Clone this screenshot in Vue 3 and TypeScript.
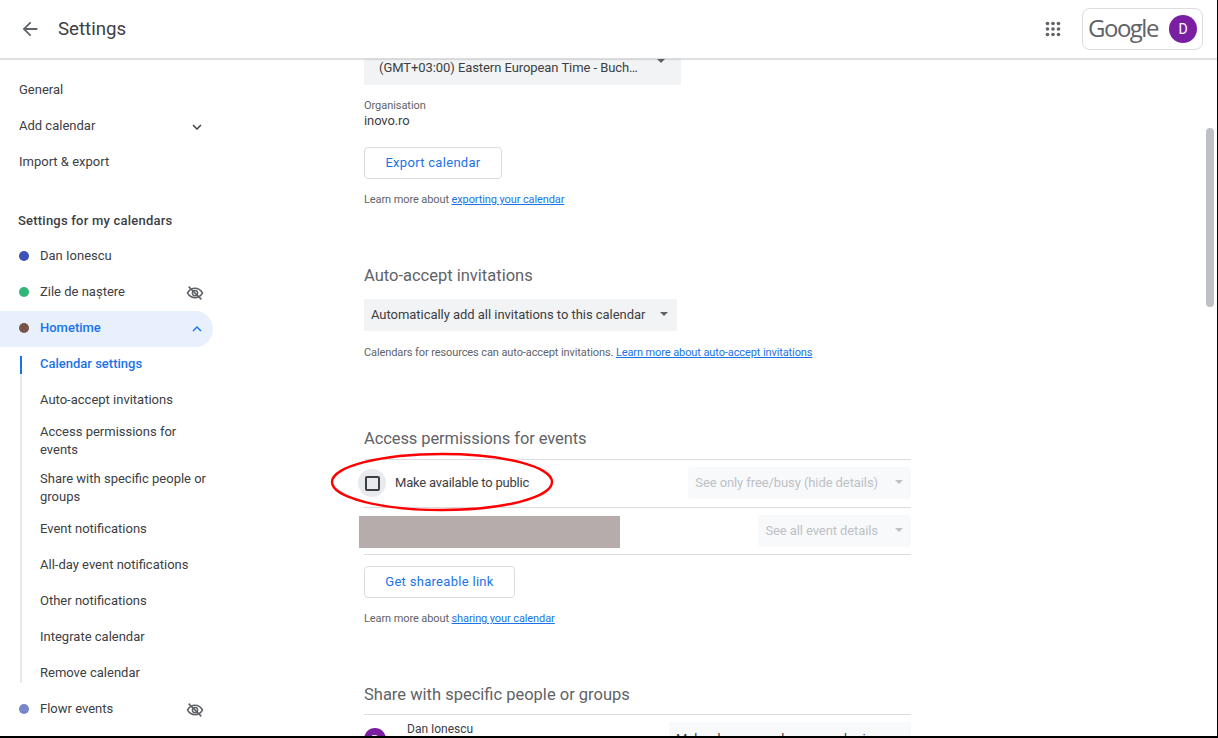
<script setup lang="ts">
const subItems: { label: string; lines?: boolean }[] = [
  { label: 'Auto-accept invitations' },
  { label: 'Access permissions for events', lines: true },
  { label: 'Share with specific people or groups', lines: true },
  { label: 'Event notifications' },
  { label: 'All-day event notifications' },
  { label: 'Other notifications' },
  { label: 'Integrate calendar' },
  { label: 'Remove calendar' },
]
</script>

<template>
  <div class="page">
    <header class="top">
      <svg class="back" width="22" height="22" viewBox="0 0 24 24"><path d="M20 11H7.83l5.59-5.59L12 4l-8 8 8 8 1.41-1.41L7.83 13H20v-2z" fill="#5f6368"/></svg>
      <div class="title">Settings</div>
      <svg class="apps" width="22" height="22" viewBox="0 0 24 24" fill="#5f6368"><circle cx="6" cy="6" r="2"/><circle cx="12" cy="6" r="2"/><circle cx="18" cy="6" r="2"/><circle cx="6" cy="12" r="2"/><circle cx="12" cy="12" r="2"/><circle cx="18" cy="12" r="2"/><circle cx="6" cy="18" r="2"/><circle cx="12" cy="18" r="2"/><circle cx="18" cy="18" r="2"/></svg>
      <div class="account">
        <span class="wordmark">Google</span>
        <span class="avatar">D</span>
      </div>
    </header>

    <div class="body">
      <nav class="side">
        <div class="item">General</div>
        <div class="item between">Add calendar
          <svg width="18" height="18" viewBox="0 0 24 24"><path d="M7.41 8.59 12 13.17l4.59-4.58L18 10l-6 6-6-6z" fill="#3c4043"/></svg>
        </div>
        <div class="item">Import &amp; export</div>
        <div class="group">Settings for my calendars</div>
        <div class="item cal"><i class="dot" style="background:#3f51b5"></i>Dan Ionescu</div>
        <div class="item cal"><i class="dot" style="background:#33b679"></i>Zile de naștere
          <svg class="eye" width="18" height="18" viewBox="0 0 24 24" fill="none" stroke="#5f6368" stroke-width="2"><path d="M2 12c2.500-4.200 6-6.300 10-6.300s7.500 2.100 10 6.300c-2.500 4.200-6 6.300-10 6.300S4.500 16.200 2 12z"/><circle cx="12" cy="12" r="3.500"/><path d="M3.500 3.500l17 17"/></svg>
        </div>
        <div class="item cal active"><i class="dot" style="background:#795548"></i>Hometime
          <svg class="chev" width="18" height="18" viewBox="0 0 24 24"><path d="M7.41 15.41 12 10.830l4.590 4.580L18 14l-6-6-6 6z" fill="#1a73e8"/></svg>
        </div>
        <div class="subs">
          <div class="sub current">Calendar settings</div>
          <div v-for="s in subItems" :key="s.label" class="sub" :class="{ two: s.lines }">{{ s.label }}</div>
        </div>
        <div class="item cal"><i class="dot" style="background:#7986cb"></i>Flowr events
          <svg class="eye" width="18" height="18" viewBox="0 0 24 24" fill="none" stroke="#5f6368" stroke-width="2"><path d="M2 12c2.500-4.200 6-6.300 10-6.300s7.500 2.100 10 6.300c-2.500 4.200-6 6.300-10 6.300S4.500 16.200 2 12z"/><circle cx="12" cy="12" r="3.500"/><path d="M3.500 3.500l17 17"/></svg>
        </div>
      </nav>

      <main class="main">
        <div class="content">
          <div class="tz">
            <span>(GMT+03:00) Eastern European Time - Buch…</span>
            <i class="caret dark tzcaret"></i>
          </div>
          <div class="label">Organisation</div>
          <div class="org">inovo.ro</div>
          <button class="btn export">Export calendar</button>
          <p class="hint">Learn more about <a>exporting your calendar</a></p>

          <h2 class="h auto">Auto-accept invitations</h2>
          <div class="select">Automatically add all invitations to this calendar<i class="caret dark"></i></div>
          <p class="hint h2gap">Calendars for resources can auto-accept invitations. <a>Learn more about auto-accept invitations</a></p>

          <h2 class="h access">Access permissions for events</h2>
          <div class="row first">
            <div class="check">
              <span class="halo"><span class="box"></span></span>
              <span class="checklabel">Make available to public</span>
              <svg class="ring" width="226" height="62" viewBox="0 0 226 62"><ellipse cx="113" cy="31" rx="110" ry="28" fill="none" stroke="#f00" stroke-width="2.400"/></svg>
            </div>
            <div class="select off">See only free/busy (hide details)<i class="caret"></i></div>
          </div>
          <div class="row second">
            <div class="redact"></div>
            <div class="select off">See all event details<i class="caret"></i></div>
          </div>
          <button class="btn link">Get shareable link</button>
          <p class="hint">Learn more about <a>sharing your calendar</a></p>

          <h2 class="h share">Share with specific people or groups</h2>
          <div class="person">
            <span class="pavatar">D</span>
            <span class="pname">Dan Ionescu</span>
            <div class="select perm">Make changes and manage sharing</div>
          </div>
        </div>
      </main>

      <div class="track"><div class="thumb"></div></div>
    </div>
    <div class="edge"></div>
  </div>
</template>

<style>
html, body { margin: 0; overflow: hidden; background: #fff; }
</style>

<style scoped>
.page {
  width: 1218px; height: 738px; display: flex; flex-direction: column; overflow: hidden; position: relative;
  font-family: Roboto, "Liberation Sans", sans-serif; color: #3c4043; background: #fff;
}
.page::after { content: ""; position: absolute; right: 0; top: 0; bottom: 0; width: 1px; background: #000; z-index: 4; }
.top {
  height: 58px; flex: none; display: flex; align-items: center; border-bottom: 1px solid #dadce0;
  box-shadow: 0 1px 1px rgba(60,64,67,.15); position: relative; z-index: 2; background: #fff;
}
.back { margin-left: 19px; }
.title { font-size: 18.7px; margin-left: 17px; flex: 1; color: #3c4043; }
.apps { margin-right: 18px; }
.account {
  width: 121px; height: 42px; margin-right: 15px; border: 1px solid #dadce0; border-radius: 8px;
  display: flex; align-items: center; justify-content: space-between; padding: 0 5px 0 5px; box-sizing: border-box;
}
.wordmark { font-family: "Open Sans", sans-serif; font-size: 24px; letter-spacing: -1.5px; color: #5f6368; margin-top: -3px; }
.avatar {
  width: 28px; height: 28px; border-radius: 50%; background: #7b1fa2; color: #fff; font-size: 14px;
  display: flex; align-items: center; justify-content: center;
}
.body { flex: 1; display: flex; min-height: 0; }
.side { width: 213px; flex: none; padding-top: 13px; font-size: 13px; box-sizing: border-box; }
.item {
  height: 36px; display: flex; align-items: center; padding-left: 19px; padding-bottom: 2px; box-sizing: border-box; position: relative;
  color: #3c4043;
}
.between svg { position: absolute; left: 188px; top: 10px; }
.group { font-size: 13px; font-weight: 500; margin-top: 23px; height: 36px; line-height: 36px; padding-left: 18px; letter-spacing: .22px; color: #3c4043; }
.cal { padding-left: 40px; padding-bottom: 4px; }
.dot { position: absolute; left: 19px; top: 12px; width: 10px; height: 10px; border-radius: 50%; }
.eye { position: absolute; left: 186px; top: 9px; }
.chev { position: absolute; left: 188px; top: 9px; }
.active { background: #e8f0fe; color: #1a73e8; font-weight: 500; border-radius: 0 18px 18px 0; }
.subs { margin-left: 20px; padding-left: 20px; width: 173px; position: relative; }
.subs::before { content: ""; position: absolute; left: 0; top: 9px; bottom: 9px; width: 2px; background: #e8eaed; }
.sub { height: 36px; line-height: 34px; color: #3c4043; }
.sub.two { height: auto; line-height: 18px; padding: 4px 0 6.5px; width: 170px; }
.current { color: #1a73e8; font-weight: 500; position: relative; }
.current::before { content: ""; position: absolute; left: -20px; top: 9px; height: 18px; width: 2px; background: #1a73e8; }
.main { width: 547px; margin-left: 115px; padding-left: 36px; flex: none; overflow: hidden; position: relative; }
.content { display: flex; flex-direction: column; align-items: flex-start; }
.tz {
  width: 317px; height: 26px; box-sizing: border-box; background: #f1f3f4; border-radius: 0 0 2px 2px;
  font-size: 13px; padding-left: 15px; letter-spacing: -.07px; position: relative; line-height: 17px;
}
.tzcaret { position: absolute; right: 16px; top: 0; margin: 0; }
.label { font-size: 11px; color: #5f6368; margin-top: 14px; line-height: 14px; letter-spacing: -.05px; }
.org { font-size: 13px; line-height: 18px; margin-top: -1px; color: #3c4043; letter-spacing: -.1px; }
.btn {
  font: 400 13px Roboto, sans-serif; color: #1a73e8; background: #fff; border: 1px solid #dadce0; border-radius: 4px;
  height: 32px; padding: 0 0 2px; letter-spacing: .3px;
}
.export { width: 138px; margin-top: 17px; }
.hint { font-size: 11px; color: #5f6368; margin: 14px 0 0; line-height: 14px; letter-spacing: -.1px; }
.hint a { color: #1a73e8; text-decoration: underline; }
.h { font-weight: 400; font-size: 16.5px; color: #5f6368; margin: 0; line-height: 22px; }
.auto { margin-top: 58px; }
.select {
  display: flex; align-items: center; background: #f1f3f4; height: 32px; font-size: 13px; color: #3c4043;
  padding: 0 9px 2px 7px; box-sizing: border-box; border-radius: 2px; margin-top: 12px; letter-spacing: -.04px;
}
.caret { display: inline-block; width: 0; height: 0; border: 4px solid transparent; border-top: 4px solid #bdc1c6; border-bottom: 0; margin-left: 15px; }
.caret.dark { border-top-color: #5f6368; }
.h2gap { margin-top: 15px; }
.access { margin-top: 68px; letter-spacing: -.1px; }
.row {
  width: 547px; height: 48px; display: flex; align-items: center; justify-content: space-between;
  border-bottom: 1px solid #dadce0; box-sizing: border-box;
}
.first { height: 49px; border-top: 1px solid #dadce0; margin-top: 9px; padding-bottom: 1px; }
.second { height: 47px; }
.check { display: flex; align-items: center; position: relative; margin-left: -6px; }
.halo { width: 28px; height: 28px; border-radius: 50%; background: #e8eaed; display: flex; align-items: center; justify-content: center; }
.box { width: 15px; height: 15px; border: 2px solid #3c4043; border-radius: 2px; box-sizing: border-box; }
.checklabel { font-size: 13px; margin: -2px 0 0 9px; letter-spacing: -.2px; color: #3c4043; }
.ring { position: absolute; left: -29px; top: -18px; }
.select.off { margin-top: 0; background: #f8f9fa; color: #bdc1c6; padding: 0 8px 2px 7px; border-radius: 4px; letter-spacing: -.09px; }
.off .caret { margin-left: 17px; }
.redact { width: 261px; height: 32px; background: #b5acab; margin: 2px 0 0 -5px; }
.link { width: 151px; margin-top: 11px; }
.share { margin-top: 58px; }
.person { width: 547px; border-top: 1px solid #dadce0; margin-top: 8px; display: flex; position: relative; height: 40px; }
.pavatar { position: absolute; top: 13px; left: 0; width: 22px; height: 22px; border-radius: 50%; background: #7b1fa2; color: #fff; font-size: 11px; display: flex; align-items: center; justify-content: center; }
.pname { font-size: 12px; margin-left: 43px; margin-top: 6px; line-height: 16px; color: #3c4043; }
.select.perm { position: absolute; left: 305px; top: 7px; width: 242px; height: 40px; margin: 0; align-items: flex-start; padding-top: 9px; background: #f8f9fa; }
.track { width: 12px; margin-left: auto; flex: none; position: relative; }
.thumb { position: absolute; left: 0; top: 69px; width: 8px; height: 179px; border-radius: 4px; background: #bdc1c6; }
.edge { height: 2px; flex: none; background: #000; position: relative; z-index: 3; }
</style>
